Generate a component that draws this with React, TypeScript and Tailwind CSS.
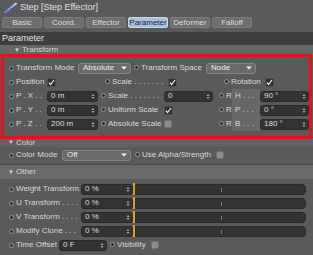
import React from "react";

const font = { fontFamily: '"Liberation Sans", Arial, sans-serif' };

function Dot() {
  return <span className="inline-block w-[5px] h-[5px] rounded-full bg-[#2e2e2e] border border-[#9a9a9a] shrink-0" />;
}

function Check({ on }: { on: boolean }) {
  if (!on) {
    return <span className="inline-block w-[8px] h-[8px] rounded-[2px] bg-[#8c8c8c] border border-[#707070] shrink-0" />;
  }
  return (
    <span className="inline-flex items-center justify-center w-[9px] h-[9px] rounded-[1px] bg-[#2f2f2f] border border-[#505050] shrink-0">
      <svg width="7" height="7" viewBox="0 0 7 7">
        <path d="M1 3.6 L2.6 5.6 L6 1" stroke="#f2f2f2" strokeWidth="1.2" fill="none" />
      </svg>
    </span>
  );
}

function Field({ value, w }: { value: string; w: string }) {
  return (
    <span className={`flex items-center justify-between h-[11px] rounded-[3px] bg-[#333333] border border-[#2a2a2a] pl-[3px] pr-[2px] text-[#dcdcdc] shrink-0 ${w}`}>
      <span>{value}</span>
      <svg width="4" height="7" viewBox="0 0 4 7">
        <path d="M0.5 3 L2 1 L3.5 3 Z M0.5 4 L2 6 L3.5 4 Z" fill="#a8a8a8" />
      </svg>
    </span>
  );
}

function Drop({ value, w }: { value: string; w: string }) {
  return (
    <span className={`flex items-center justify-between h-[11px] rounded-[3px] bg-[#6a6a6a] border border-[#858585] pl-[4px] pr-[3px] text-[#ececec] shrink-0 ${w}`}>
      <span>{value}</span>
      <svg width="6" height="4" viewBox="0 0 6 4">
        <path d="M0 0.5 L6 0.5 L3 3.5 Z" fill="#f0f0f0" />
      </svg>
    </span>
  );
}

function Label({ text, w }: { text: string; w: string }) {
  return <span className={`shrink-0 whitespace-nowrap overflow-hidden ${w}`}>{text}</span>;
}

function Band({ text, className }: { text: string; className: string }) {
  return (
    <div className={`flex items-center pl-[8px] text-[#d6d6d6] ${className}`}>
      <span className="text-[6px] mr-[2px]">▼</span>
      {text}
    </div>
  );
}

function SliderRow({ label }: { label: string }) {
  return (
    <div className="flex items-center h-[14px] pl-[9px]">
      <Dot />
      <span className="ml-[2px] w-[65px] whitespace-nowrap overflow-hidden">{label}</span>
      <Field value="0 %" w="w-[52px]" />
      <span className="w-[2px] h-[12px] bg-[#e0a01c]" />
      <span className="relative flex-1 h-[11px] mr-[7px] rounded-r-[4px] bg-[#333333] border border-[#2a2a2a]">
        <span className="absolute left-[85px] top-[3px] w-[1px] h-[4px] bg-[#9a7a30]" />
      </span>
    </div>
  );
}

const tabs = ["Basic", "Coord.", "Effector", "Parameter", "Deformer", "Falloff"];

const xyz = [
  ["P . X . .", "0 m", "Scale . . . . . . .", "0", "H . . .", "90 °"],
  ["P . Y . .", "0 m", "Uniform Scale", "on", "P . . .", "0 °"],
  ["P . Z . .", "200 m", "Absolute Scale", "off", "B . . .", "180 °"],
];

export default function App() {
  return (
    <div className="relative w-[313px] h-[255px] overflow-hidden bg-[#5a5a5a] text-[8px] text-[#d8d8d8]" style={font}>
      {/* title */}
      <div className="flex items-center h-[15px] pl-[3px] text-[9px] text-[#e0e0e0]">
        <svg width="16" height="12" viewBox="0 0 16 12" className="mr-[1px]">
          <path d="M1 10 L4 8 L5 9.5 L2 11.5 Z" fill="#6f8fe0" />
          <path d="M4 7.5 L7 5.5 L8 7 L5 9 Z" fill="#89a6f0" />
          <path d="M7 5 L10 3 L11 4.5 L8 6.5 Z" fill="#a6bdf5" />
          <path d="M10 2.5 L13 0.5 L14.5 2 L11 4 Z" fill="#c2d2fa" />
          <path d="M2 11.5 L14.5 2 L14.5 3.5 L3 12 Z" fill="#3f5fb8" />
        </svg>
        Step [Step Effector]
      </div>
      {/* tabs */}
      <div className="flex gap-[2px] pl-[2px] pt-[2px] h-[17px]">
        {tabs.map((t) => (
          <div
            key={t}
            className={`flex items-center justify-center w-[40px] h-[11px] rounded-[2px] border ${
              t === "Parameter"
                ? "bg-[#a8c0de] border-[#c8d8ec] text-[#1c2636]"
                : "bg-[#6e6e6e] border-[#7c7c7c] text-[#dcdcdc]"
            }`}
          >
            {t}
          </div>
        ))}
      </div>
      {/* Parameter header */}
      <div className="flex items-center h-[13px] pl-[2px] bg-[#3e3e3e] text-[#e4e4e4] text-[9px]">Parameter</div>
      <Band text="Transform" className="h-[10px] bg-[#666666] pl-[14px]" />
      {/* transform rows */}
      <div className="pt-[6px] pb-[6px]">
        <div className="flex items-center h-[14px] pl-[9px]">
          <Dot />
          <Label text="Transform Mode" w="w-[62px] ml-[2px]" />
          <Drop value="Absolute" w="w-[53px]" />
          <span className="ml-[3px]"><Dot /></span>
          <Label text="Transform Space" w="w-[65px] ml-[2px]" />
          <Drop value="Node" w="w-[50px]" />
        </div>
        <div className="flex items-center h-[14px] pl-[9px]">
          <Dot />
          <Label text="Position" w="w-[31px] ml-[2px]" />
          <Check on />
          <span className="ml-[49px]"><Dot /></span>
          <Label text="Scale . . . . . . ." w="w-[56px] ml-[2px]" />
          <Check on />
          <span className="ml-[47px]"><Dot /></span>
          <Label text="Rotation" w="w-[34px] ml-[2px]" />
          <Check on />
        </div>
        {xyz.map(([a, av, b, bv, r, rv]) => (
          <div key={a} className="flex items-center h-[14px] pl-[9px]">
            <Dot />
            <Label text={a} w="w-[31px] ml-[2px]" />
            <Field value={av} w="w-[51px]" />
            <span className="ml-[3px]"><Dot /></span>
            <Label text={b} w="w-[56px] ml-[2px]" />
            {bv === "0" ? (
              <Field value="0" w="w-[49px]" />
            ) : (
              <span className="w-[49px] flex">
                <Check on={bv === "on"} />
              </span>
            )}
            <span className="ml-[6px]"><Dot /></span>
            <span className="ml-[2px] w-[34px] flex items-center whitespace-nowrap">
              <span className="w-[6px]">R</span>
              <span className="bg-[#686868] h-[14px] flex items-center pl-[3px] w-[28px]">{r}</span>
            </span>
            <Field value={rv} w="w-[49px]" />
          </div>
        ))}
      </div>
      <div className="h-[1px] bg-[#474747]" />
      <Band text="Color" className="h-[9px] bg-[#626262]" />
      <div className="flex items-center h-[14px] pl-[9px] mt-[1px]">
        <Dot />
        <Label text="Color Mode" w="w-[46px] ml-[2px]" />
        <Drop value="Off" w="w-[69px]" />
        <span className="ml-[4px]"><Dot /></span>
        <Label text="Use Alpha/Strength" w="w-[74px] ml-[2px]" />
        <Check on={false} />
      </div>
      <div className="h-[2px]" />
      <div className="h-[1px] bg-[#474747]" />
      <Band text="Other" className="h-[14px] bg-[#6a6a6a]" />
      <div className="pt-[3px]">
        <SliderRow label="Weight Transform" />
        <SliderRow label="U Transform . . . ." />
        <SliderRow label="V Transform . . . ." />
        <SliderRow label="Modify Clone . . ." />
        <div className="flex items-center h-[14px] pl-[9px]">
          <Dot />
          <Label text="Time Offset" w="w-[43px] ml-[2px]" />
          <Field value="0 F" w="w-[48px]" />
          <span className="ml-[3px]"><Dot /></span>
          <Label text="Visibility" w="w-[34px] ml-[2px]" />
          <Check on={false} />
        </div>
      </div>
      {/* red annotation frame */}
      <div className="absolute left-[1px] top-[54px] w-[311px] h-[85px] border-[3px] border-[#e2141b] pointer-events-none" />
    </div>
  );
}
